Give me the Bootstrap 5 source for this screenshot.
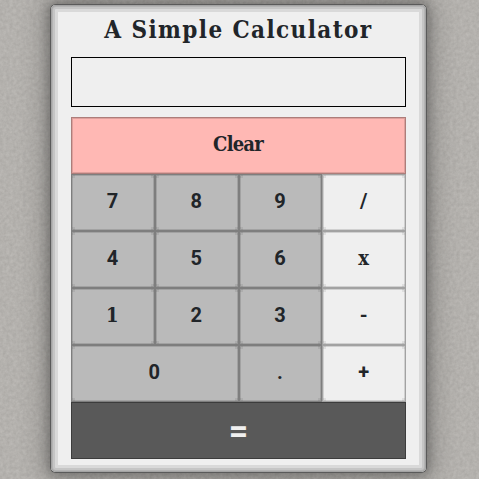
<!DOCTYPE html>
<html lang="en">
<head>
<meta charset="utf-8">
<meta name="viewport" content="width=device-width, initial-scale=1">
<title>A Simple Calculator</title>
<link href="https://cdn.jsdelivr.net/npm/bootstrap@5.3.0/dist/css/bootstrap.min.css" rel="stylesheet">
<style>
body { background: #b2b0ac; height: 479px; font-family: "Roboto Slab", "DejaVu Serif Condensed", "DejaVu Serif", serif; font-stretch: condensed; color: #212529; }
.wall { z-index: -1; }
.calculator { width: 375px; height: 467px; margin: 5px 0 0 51px; padding: 9px 20px 13px; background: #efefef; border-radius: 5px;
  box-shadow: inset 0 0 0 1px #a4a4a4, inset 0 0 0 2px #b4b4b4, inset 0 0 0 4px #c5c5c5, inset 0 0 0 7px #d9d9d9, 0 0 0 1px #5a5a5a, 0 0 10px 4px rgba(0,0,0,.2), 0 0 26px 8px rgba(0,0,0,.22); }
.title { font-size: 24px; line-height: 31px; height: 43px; letter-spacing: 1.4px; font-weight: 700; white-space: nowrap; }
.screen { height: 50px; border: 1px solid #000; margin-bottom: 10px; }
.keys { display: grid; grid-template-columns: repeat(4, 1fr); grid-auto-rows: 57px; }
.key { border: 1px solid rgba(0,0,0,.32); border-radius: 0; padding: 0 1px 4px 0; background: #bababa; color: #212529; font: 700 20px/1 "Roboto Slab", Roboto, sans-serif; box-shadow: inset 0 0 0 1px rgba(0,0,0,.13); }
.key-digit, .key-op { background-image:
  linear-gradient(rgba(0,0,0,.07), rgba(0,0,0,.07)), linear-gradient(rgba(0,0,0,.07), rgba(0,0,0,.07)),
  linear-gradient(rgba(0,0,0,.07), rgba(0,0,0,.07)), linear-gradient(rgba(0,0,0,.07), rgba(0,0,0,.07));
  background-size: 3px 3px; background-repeat: no-repeat; background-position: 0 0, 100% 0, 0 100%, 100% 100%; }
.key-clear, .key-serif { font-family: "Roboto Slab", "DejaVu Serif Condensed", "DejaVu Serif", serif; font-stretch: condensed; font-size: 20px; }
.key-clear { grid-column: span 4; background: #ffb8b4; letter-spacing: -.8px; }
.key-op { background-color: #efefef; }
.key-zero { grid-column: span 2; }
.key-equals { grid-column: span 4; background: #595959; box-shadow: none; padding: 0; }
.equals-sign { font-size: 34px; color: #f0f0f0; position: relative; top: -1px; }
</style>
<script src="https://cdn.jsdelivr.net/npm/bootstrap@5.3.0/dist/js/bootstrap.bundle.min.js"></script>
</head>
<body class="m-0 overflow-hidden position-relative">
<svg class="wall position-absolute top-0 start-0" width="479" height="479" aria-hidden="true">
  <filter id="grain" x="0" y="0" width="100%" height="100%" color-interpolation-filters="sRGB">
    <feTurbulence type="fractalNoise" baseFrequency=".3" numOctaves="3" seed="4"/>
    <feColorMatrix values=".09 0 0 0 .66  .09 0 0 0 .65  .09 0 0 0 .635  0 0 0 0 1"/>
  </filter>
  <rect width="479" height="479" filter="url(#grain)"/>
</svg>
<main class="calculator d-flex flex-column">
  <h1 class="title text-center m-0">A Simple Calculator</h1>
  <div class="screen"></div>
  <div class="keys">
    <button class="key key-clear">Clear</button>
    <button class="key key-digit">7</button><button class="key key-digit">8</button><button class="key key-digit">9</button><button class="key key-op">/</button>
    <button class="key key-digit">4</button><button class="key key-digit">5</button><button class="key key-digit">6</button><button class="key key-op key-serif">x</button>
    <button class="key key-digit key-serif">1</button><button class="key key-digit">2</button><button class="key key-digit">3</button><button class="key key-op">-</button>
    <button class="key key-digit key-zero">0</button><button class="key key-digit">.</button><button class="key key-op">+</button>
    <button class="key key-equals"><span class="equals-sign">=</span></button>
  </div>
</main>
</body>
</html>
